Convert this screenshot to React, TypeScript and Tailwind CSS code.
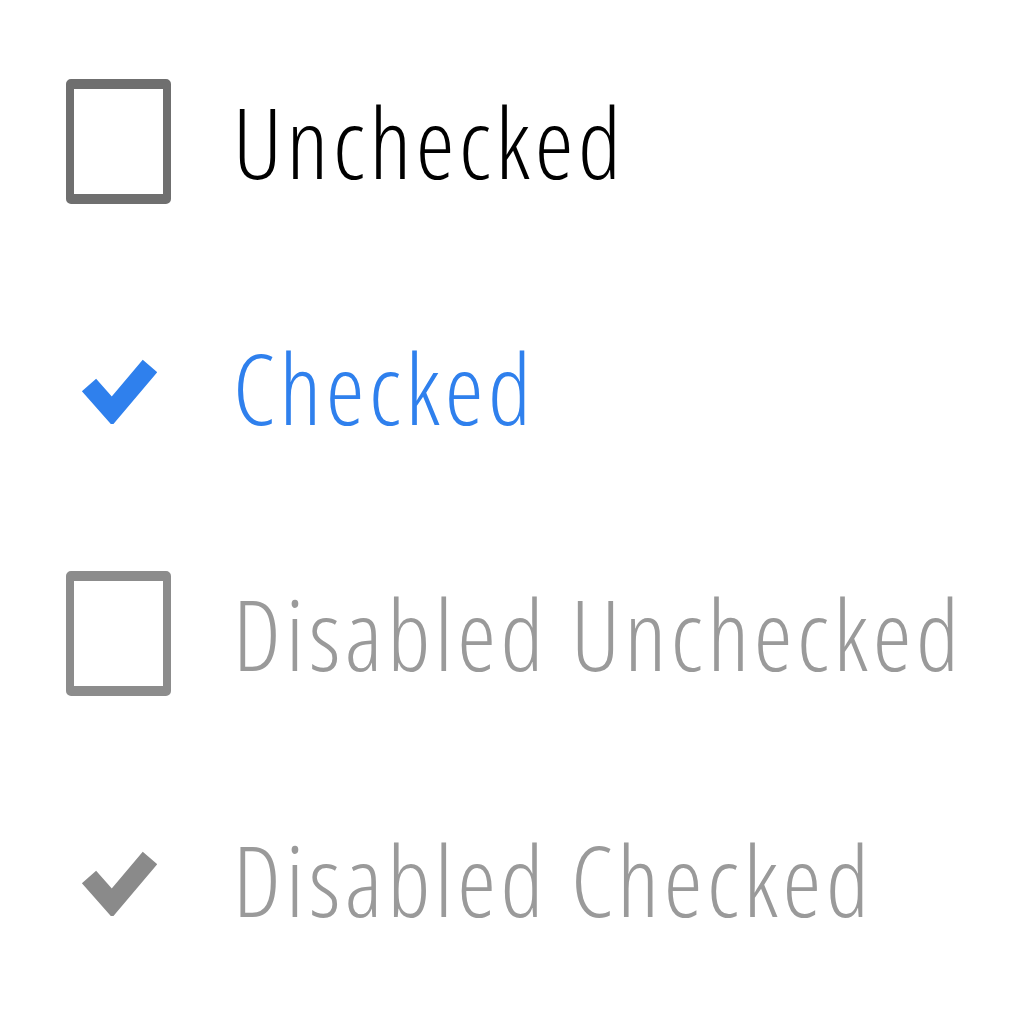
type Item = { label: string; checked: boolean; disabled: boolean };

const items: Item[] = [
  { label: "Unchecked", checked: false, disabled: false },
  { label: "Checked", checked: true, disabled: false },
  { label: "Disabled Unchecked", checked: false, disabled: true },
  { label: "Disabled Checked", checked: true, disabled: true },
];

function Check({ color }: { color: string }) {
  return (
    <svg width="77" height="73" viewBox="0 0 77 73" className="block">
      <polyline
        points="9,34 32,60 70,15"
        fill="none"
        stroke={color}
        strokeWidth="19"
        strokeLinecap="butt"
        strokeLinejoin="miter"
      />
    </svg>
  );
}

export default function App() {
  return (
    <div className="w-[1024px] h-[1024px] bg-white pt-[18px] pl-[66px] flex flex-col font-['Open_Sans',sans-serif] font-light font-stretch-[85%]">
      {items.map((it) => (
        <div key={it.label} className="h-[246px] flex items-center gap-[62px]">
          <div className="w-[105px] flex items-center justify-center">
            {it.checked ? (
              <Check color={it.disabled ? "#8a8a8a" : "#2f80ed"} />
            ) : (
              <div
                className={
                  it.disabled
                    ? "w-[105px] h-[125px] border-x-8 border-y-[10px] border-[#8c8c8c] rounded-[5px] bg-white"
                    : "w-[105px] h-[125px] border-x-8 border-y-[10px] border-[#6f6f6f] rounded-[5px] bg-white"
                }
              />
            )}
          </div>
          <span
            className={
              it.disabled
                ? "text-[98px] leading-none tracking-[4.6px] text-[#9a9a9a] whitespace-nowrap"
                : it.checked
                ? "text-[98px] leading-none tracking-[4.6px] text-[#2f80ed] whitespace-nowrap"
                : "text-[98px] leading-none tracking-[4.6px] text-black whitespace-nowrap"
            }
          >
            {it.label}
          </span>
        </div>
      ))}
    </div>
  );
}
